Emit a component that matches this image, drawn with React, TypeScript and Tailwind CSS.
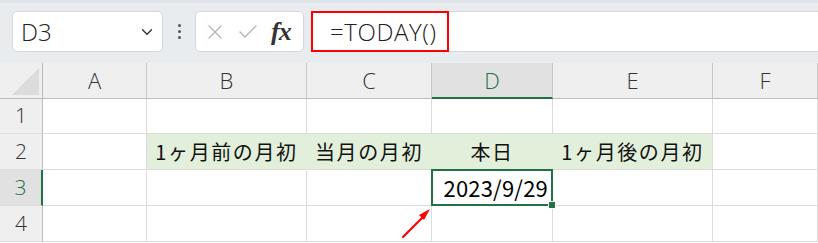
import { ChevronDown, X, Check } from 'lucide-react';

const COLS = ['A', 'B', 'C', 'D', 'E', 'F'];
const WIDTHS = [104, 160, 125, 121, 160, 105];
const HEIGHTS = [35, 36, 36, 36];

const jp = "font-['Noto_Sans_CJK_JP','Noto_Sans',sans-serif]";
const ui = "font-['Open_Sans','Noto_Sans',sans-serif]";

const row2: Record<string, string> = {
  B: '1ヶ月前の月初',
  C: '当月の月初',
  D: '本日',
  E: '1ヶ月後の月初',
};

export default function App() {
  return (
    <div className="w-[818px] h-[243px] overflow-hidden bg-white">
      <FormulaBar />
      <div
        className="grid"
        style={{
          gridTemplateColumns: `43px ${WIDTHS.map((w) => w + 'px').join(' ')}`,
          gridTemplateRows: `36px ${HEIGHTS.map((h) => h + 'px').join(' ')}`,
        }}
      >
        {/* corner */}
        <div className="relative bg-[#efefef] border-r border-b border-[#bdbdbd]">
          <div className="absolute right-[3px] bottom-[3px] w-0 h-0 border-l-[27px] border-l-transparent border-b-[27px] border-b-[#dcdcdc]" />
        </div>
        {COLS.map((c) => (
          <div
            key={c}
            className={`flex items-center justify-center text-[22px] font-light ${ui} ${
              c === 'D'
                ? 'bg-[#e1e1e1] text-[#1e7145] border-r border-[#c8c8c8] border-b-2 border-b-[#1e7145]'
                : 'bg-[#efefef] text-[#333] border-r border-b border-[#c8c8c8] border-b-[#bdbdbd]'
            }`}
          >
            {c}
          </div>
        ))}

        {[1, 2, 3, 4].map((r) => (
          <Row key={r} r={r} />
        ))}
      </div>
    </div>
  );
}

function Row({ r }: { r: number }) {
  const sel = r === 3;
  return (
    <>
      <div
        className={`flex items-center justify-center text-[21px] font-light ${ui} border-b border-[#dcdcdc] ${
          sel
            ? 'bg-[#e1e1e1] text-[#1e7145] border-r-2 border-r-[#1e7145]'
            : 'bg-[#efefef] text-[#333] border-r border-r-[#bdbdbd]'
        }`}
      >
        {r}
      </div>
      {COLS.map((c) => {
        const green = r === 2 && c !== 'A' && c !== 'F';
        if (r === 3 && c === 'D') {
          return (
            <div key={c} className="relative border-r border-b border-[#dcdcdc]">
              <div className="absolute -left-px -top-px -right-px -bottom-px border-2 border-[#217346] flex items-center justify-end pr-[3px]">
                <span className={`text-[22px] tracking-[0.2px] text-black ${jp}`}>2023/9/29</span>
              </div>
              <div className="absolute -right-[4px] -bottom-[4px] w-[6px] h-[6px] bg-[#217346] border border-white box-content" />
            </div>
          );
        }
        return (
          <div
            key={c}
            className={`flex items-center justify-center border-b border-[#dcdcdc] border-r ${
              green && c !== 'E' ? 'bg-[#e2efda] border-r-[#e2efda]' : green ? 'bg-[#e2efda] border-r-[#dcdcdc]' : 'border-r-[#dcdcdc]'
            }`}
          >
            {r === 2 && row2[c] && (
              <span className={`text-[20px] tracking-[1.6px] text-[#111] ${jp}`}>{row2[c]}</span>
            )}
          </div>
        );
      })}
      {r === 4 && <Arrow />}
    </>
  );
}

function Arrow() {
  return (
    <svg
      className="fixed left-[398px] top-[205px] pointer-events-none"
      width="36"
      height="36"
      viewBox="0 0 36 36"
    >
      <line x1="5" y1="32" x2="26" y2="11" stroke="#ff0000" strokeWidth="2.2" strokeLinecap="round" />
      <polygon points="32,4 21,10 26,15" fill="#ff0000" />
    </svg>
  );
}

function FormulaBar() {
  return (
    <div className="h-[63px] bg-[#e9ecef] border-t-[3px] border-t-[#e0e3e7] pt-[8px] pb-[11px] flex items-stretch">
      <div className="ml-[12px] w-[151px] bg-white border border-[#d4d7db] rounded-[5px] flex items-center pl-[8px] pr-[6px]">
        <span className={`text-[24px] font-light text-[#222] ${ui}`}>D3</span>
        <ChevronDown className="ml-auto w-[18px] h-[18px] text-[#333]" strokeWidth={1.8} />
      </div>
      <div className="w-[32px] flex flex-col items-center justify-center gap-[3px]">
        <span className="w-[3px] h-[3px] rounded-full bg-[#555]" />
        <span className="w-[3px] h-[3px] rounded-full bg-[#555]" />
        <span className="w-[3px] h-[3px] rounded-full bg-[#555]" />
      </div>
      <div className="w-[109px] bg-white border border-[#d4d7db] rounded-[5px] flex items-center pl-[7px] gap-[9px]">
        <X className="w-[24px] h-[24px] text-[#b4b4b4]" strokeWidth={1.3} />
        <Check className="w-[24px] h-[24px] text-[#b4b4b4]" strokeWidth={1.3} />
        <span className="ml-[2px] text-[26px] italic font-bold text-[#333] font-['Liberation_Serif',serif] tracking-[-1px] leading-none">fx</span>
      </div>
      <div className="ml-[7px] flex-1 bg-white border-y border-[#d4d7db] relative flex items-center">
        <div className="absolute left-0 top-[-1px] w-[138px] bottom-[-1px] border-2 border-[#ff0000]" />
        <span className={`ml-[19px] text-[24px] font-light tracking-[0.6px] text-[#222] ${ui}`}>=TODAY()</span>
      </div>
    </div>
  );
}
